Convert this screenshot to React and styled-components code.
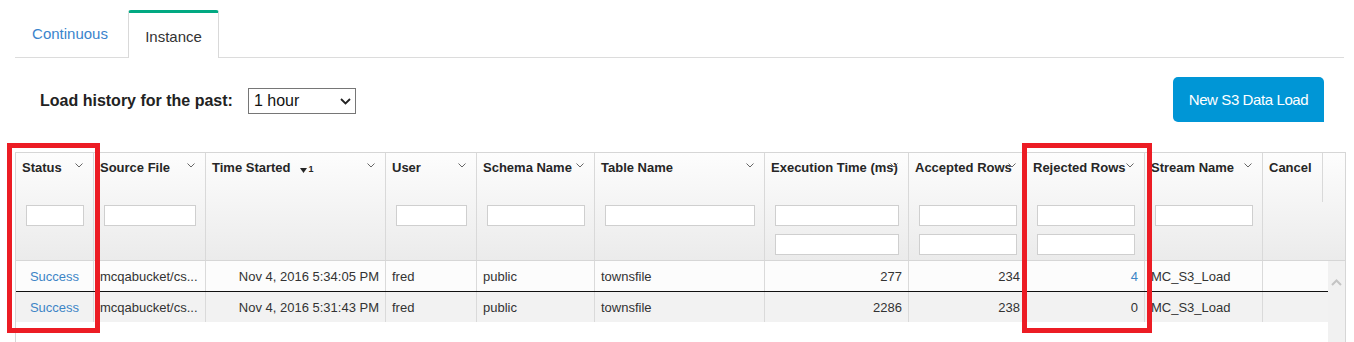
import React from "react"
import styled, { createGlobalStyle } from "styled-components"

const GlobalStyle = createGlobalStyle`
  html, body {
    margin: 0;
    padding: 0;
    background: #fff;
  }
  body {
    font-family: "Liberation Sans", Arial, sans-serif;
    color: #333;
  }
`

const Page = styled.div`
  position: relative;
  box-sizing: border-box;
  width: 1354px;
  height: 342px;
  overflow: hidden;
  padding: 10px 8px 0 15px;
`

const Tabs = styled.div`
  display: flex;
  align-items: stretch;
  height: 47px;
  margin-right: 2px;
  border-bottom: 1px solid #dcdcdc;
`

const Tab = styled.div`
  box-sizing: border-box;
  display: flex;
  align-items: center;
  justify-content: center;
  width: ${({ w }) => w}px;
  font-size: 15px;
  color: ${({ active }) => (active ? "#333" : "#3a84cc")};
  background: #fff;
  ${({ active }) =>
    active
      ? `
    border: 1px solid #d9d9d9;
    border-top: 3px solid #01a982;
    border-bottom: none;
    border-radius: 3px 3px 0 0;
    margin-bottom: -1px;
    padding-top: 1px;
  `
      : `
    padding: 0 3px 1px 0;
  `}
`

const Toolbar = styled.div`
  display: flex;
  align-items: center;
  justify-content: space-between;
  height: 45px;
  margin: 19px 22px 30px 0;
`

const Filter = styled.div`
  display: flex;
  align-items: center;
  padding-left: 25px;
  margin-top: 3px;
`

const Label = styled.span`
  font-size: 16px;
  font-weight: bold;
  color: #222;
  margin-right: 15px;
`

const Select = styled.div`
  box-sizing: border-box;
  display: flex;
  align-items: center;
  justify-content: space-between;
  width: 108px;
  height: 26px;
  padding: 0 4px 0 5px;
  border: 1px solid #767676;
  font-size: 16px;
  color: #111;
  background: #fff;
`

const PrimaryButton = styled.button`
  box-sizing: border-box;
  width: 151px;
  height: 45px;
  border: none;
  border-radius: 5px 5px 0 5px;
  background: #0096d6;
  color: #fff;
  font-family: inherit;
  font-size: 15px;
  letter-spacing: -0.4px;
`

const Table = styled.div`
  border: 1px solid #d6d6d6;
  border-bottom: none;
`

const cols = [78, 112, 180, 91, 118, 170, 144, 118, 118, 118]

const HeadRow = styled.div`
  display: grid;
  grid-template-columns: ${cols.map(c => c + "px").join(" ")} 59px 1fr;
  height: 107px;
  border-bottom: 1px solid #d6d6d6;
  background: linear-gradient(#fdfdfd, #ebebeb);
`

const HeadCell = styled.div`
  position: relative;
  box-sizing: border-box;
  display: flex;
  flex-direction: column;
  border-right: ${({ last }) => (last ? "none" : "1px solid #d9d9d9")};
  padding: 7px 0 0 6px;
`

const Title = styled.div`
  display: flex;
  align-items: center;
  height: 15px;
  font-size: 13px;
  font-weight: bold;
  color: #262626;
  white-space: nowrap;
`

const Chevron = styled.svg`
  position: absolute;
  top: 10px;
  right: 10px;
`

const SortMark = styled.span`
  display: inline-flex;
  align-items: flex-end;
  margin-left: 9px;
  margin-top: 3px;
  font-size: 9px;
  font-weight: bold;
  color: #262626;
`

const Inputs = styled.div`
  display: flex;
  flex-direction: column;
  gap: 8px;
  margin: 30px 9px 0 4px;
`

const FilterInput = styled.div`
  box-sizing: border-box;
  height: 21px;
  border: 1px solid #cfcfcf;
  background: #fff;
`

const Stub = styled.div`
  width: 0;
  height: 49px;
  border-left: 1px solid #d9d9d9;
`

const Body = styled.div`
  display: flex;
  height: 120px;
`

const Rows = styled.div`
  width: 1312px;
`

const Row = styled.div`
  display: grid;
  grid-template-columns: ${cols.map(c => c + "px").join(" ")} 1fr;
  height: 30px;
  background: ${({ alt }) => (alt ? "#f2f2f2" : "#fcfcfc")};
  border-bottom: ${({ alt }) => (alt ? "none" : "1px solid #111")};
`

const Cell = styled.div`
  box-sizing: border-box;
  display: flex;
  align-items: center;
  justify-content: ${({ align }) =>
    align === "right" ? "flex-end" : align === "center" ? "center" : "flex-start"};
  padding: 0 6px;
  border-right: ${({ last }) => (last ? "none" : "1px solid #dadada")};
  font-size: 13px;
  color: ${({ link }) => (link ? "#3d85c6" : "#333")};
  white-space: nowrap;
  overflow: hidden;
`

const Scrollbar = styled.div`
  flex: 1;
  display: flex;
  justify-content: center;
  padding-top: 18px;
  background: #f1f1f1;
`

const Highlight = styled.div`
  position: absolute;
  box-sizing: border-box;
  top: 143px;
  left: ${({ x }) => x}px;
  width: ${({ w }) => w}px;
  height: 190px;
  border: 5px solid #ec1c24;
`

const headers = [
  { title: "Status", inputs: 1 },
  { title: "Source File", inputs: 1 },
  { title: "Time Started", inputs: 0, sorted: true },
  { title: "User", inputs: 1 },
  { title: "Schema Name", inputs: 1 },
  { title: "Table Name", inputs: 1 },
  { title: "Execution Time (ms)", inputs: 2 },
  { title: "Accepted Rows", inputs: 2 },
  { title: "Rejected Rows", inputs: 2 },
  { title: "Stream Name", inputs: 1 },
]

const rows = [
  ["Nov 4, 2016 5:34:05 PM", "277", "234", "4"],
  ["Nov 4, 2016 5:31:43 PM", "2286", "238", "0"],
]

const DownChevron = () => (
  <Chevron width="8" height="5" viewBox="0 0 8 5">
    <path d="M0.5 0.5 L4 4 L7.5 0.5" fill="none" stroke="#666" strokeWidth="1" />
  </Chevron>
)

export default function App() {
  return (
    <Page>
      <GlobalStyle />
      <Tabs>
        <Tab w={113}>Continuous</Tab>
        <Tab w={91} active>
          Instance
        </Tab>
      </Tabs>

      <Toolbar>
        <Filter>
          <Label>Load history for the past:</Label>
          <Select>
            <span>1 hour</span>
            <svg width="11" height="7" viewBox="0 0 11 7">
              <path d="M1 1 L5.5 5.5 L10 1" fill="none" stroke="#222" strokeWidth="1.8" />
            </svg>
          </Select>
        </Filter>
        <PrimaryButton>New S3 Data Load</PrimaryButton>
      </Toolbar>

      <Table>
        <HeadRow>
          {headers.map(h => (
            <HeadCell key={h.title}>
              <Title>
                {h.title}
                {h.sorted && (
                  <SortMark>
                    <svg width="7" height="5" viewBox="0 0 7 5">
                      <path d="M0 0 H7 L3.5 5 Z" fill="#262626" />
                    </svg>
                    <span style={{ marginLeft: 2, lineHeight: "8px" }}>1</span>
                  </SortMark>
                )}
              </Title>
              <DownChevron />
              {h.inputs > 0 && (
                <Inputs>
                  {Array.from({ length: h.inputs }).map((_, i) => (
                    <FilterInput key={i} />
                  ))}
                </Inputs>
              )}
            </HeadCell>
          ))}
          <HeadCell last>
            <Title>Cancel</Title>
          </HeadCell>
          <div>
            <Stub />
          </div>
        </HeadRow>

        <Body>
          <Rows>
            {rows.map((r, i) => (
              <Row key={i} alt={i === 1}>
                <Cell align="center" link>
                  Success
                </Cell>
                <Cell>mcqabucket/cs...</Cell>
                <Cell align="right">{r[0]}</Cell>
                <Cell>fred</Cell>
                <Cell>public</Cell>
                <Cell>townsfile</Cell>
                <Cell align="right">{r[1]}</Cell>
                <Cell align="right">{r[2]}</Cell>
                <Cell align="right" link={r[3] !== "0"}>
                  {r[3]}
                </Cell>
                <Cell>MC_S3_Load</Cell>
                <Cell last />
              </Row>
            ))}
          </Rows>
          <Scrollbar>
            <svg width="11" height="7" viewBox="0 0 11 7">
              <path d="M1 6 L5.5 1.5 L10 6" fill="none" stroke="#c4c4c4" strokeWidth="2" />
            </svg>
          </Scrollbar>
        </Body>
      </Table>

      <Highlight x={7} w={93} />
      <Highlight x={1022} w={130} />
    </Page>
  )
}
